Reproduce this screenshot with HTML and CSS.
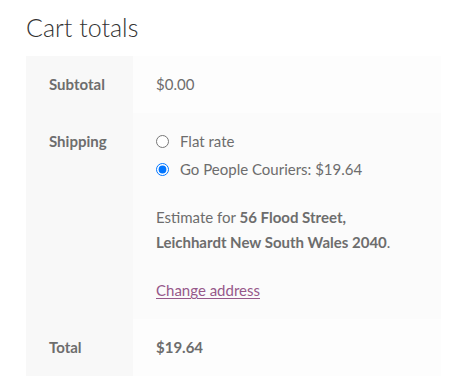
FILE: index.html
```html
<!DOCTYPE html>
<html>

<head>
    <title>Cart totals</title>
    <link rel="stylesheet" href="styles.css">
</head>

<body>
    <div class="cart-collaterals">
        <h2>Cart totals</h2>

        <table class="shop-table">
            <tbody>
                <tr class="cart-subtotal">
                    <th>Subtotal</th>
                    <td>$0.00</td>
                </tr>
                <tr class="shipping">
                    <th>Shipping</th>
                    <td>
                        <ul class="shipping-methods">
                            <li>
                                <input type="radio" name="shipping_method" id="flat_rate">
                                <label for="flat_rate">Flat rate</label>
                            </li>
                            <li>
                                <input type="radio" name="shipping_method" id="go_people" checked>
                                <label for="go_people">Go People Couriers: $19.64</label>
                            </li>
                        </ul>
                        <p class="shipping-destination">
                            Estimate for <strong>56 Flood Street, Leichhardt New South Wales 2040</strong>.
                        </p>
                        <a href="#" class="shipping-calculator-button">Change address</a>
                    </td>
                </tr>
                <tr class="order-total">
                    <th>Total</th>
                    <td><strong>$19.64</strong></td>
                </tr>
            </tbody>
        </table>
    </div>
</body>

</html>
```

FILE: styles.css
```css
body {
    margin: 0;
    font-family: 'Lato', sans-serif;
    font-size: 15px;
    color: #6d6d6d;
    background: #fff;
}

.cart-collaterals {
    width: 415px;
    padding: 0 26px;
}

h2 {
    margin: 0;
    padding-top: 10px;
    height: 46px;
    font-size: 25px;
    font-weight: 300;
    line-height: 34px;
    color: #333;
}

.shop-table {
    width: 100%;
    border-collapse: collapse;
    border-spacing: 0;
}

.shop-table th,
.shop-table td {
    padding: 16px 23px;
    line-height: 25px;
    text-align: left;
    vertical-align: top;
}

.shop-table th {
    width: 61px;
    font-weight: 700;
    background-color: #f8f8f8;
}

.shop-table td {
    background-color: #fdfdfd;
}

.shop-table tr.shipping td {
    background-color: #fbfbfb;
}

.shipping-methods {
    list-style: none;
    margin: 0 0 24px;
    padding: 0;
}

.shipping-methods li {
    display: flex;
    align-items: center;
    gap: 11px;
    height: 24px;
    margin-bottom: 4px;
}

.shipping-methods input {
    width: 13px;
    height: 13px;
    margin: 0;
}

.shipping-destination {
    margin: 0 0 23px;
    line-height: 25px;
}

.shipping-calculator-button {
    display: block;
    color: #96588a;
    text-decoration: underline;
    text-underline-offset: 2px;
}
```
